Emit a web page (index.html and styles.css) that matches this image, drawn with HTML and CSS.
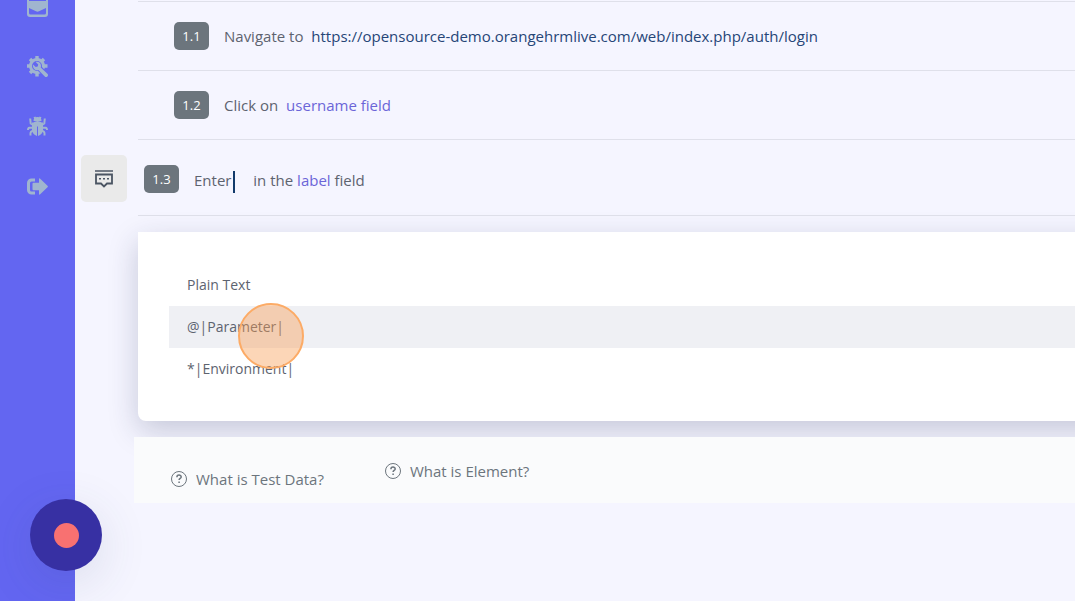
FILE: index.html
```html
<!DOCTYPE html>
<html lang="en">
<head>
<meta charset="UTF-8" />
<meta name="viewport" content="width=device-width, initial-scale=1" />
<title>Test Steps</title>
<link rel="stylesheet" href="styles.css">
</head>
<body>

<nav class="sidebar">
  <a href="#" aria-label="Inbox">
    <svg viewBox="0 0 21 21"><path fill-rule="evenodd" d="M3 0h15a3 3 0 0 1 3 3v15a3 3 0 0 1-3 3H3a3 3 0 0 1-3-3V3a3 3 0 0 1 3-3zM2 3v2h17V3zM2 12v5a1.500 1.500 0 0 0 1.500 1.500h14A1.500 1.500 0 0 0 19 17v-5l-7 3.300q-1.500.7-3 0z"/></svg>
  </a>
  <a href="#" aria-label="Settings">
    <svg viewBox="0 0 21 21">
      <circle cx="10" cy="10" r="6.500" fill="none" stroke="currentColor" stroke-width="3"/>
      <g stroke="currentColor" stroke-width="3.400">
        <path d="M10 0v4M10 16v4.500M0 10h4M16 10h4.500M3 3l3 3M17 3l-3 3M3 17l3-3"/>
      </g>
      <path class="cut" d="M12.500 12.500l7 7" stroke-width="5.500"/>
      <path d="M6 8.500L8.700 11l2-.5.5-2L8.700 6c2.600-.7 5.300 1 5.300 3.800 0 .7-.1 1.200-.3 1.700l6.700 6.300a1.800 1.800 0 0 1-2.600 2.600L11.400 14C8.400 15 5.200 12.300 6 8.500z"/>
    </svg>
  </a>
  <a href="#" aria-label="Bugs">
    <svg viewBox="0 0 21 21">
      <path d="M6.500 5a4 4 0 0 1 8 0zM5 6.500h11V14q-.5 4.500-5 6V10.500h-1V20q-4.500-1.500-5-6z"/>
      <path d="M5 8q5.500-6 11 0z"/>
      <path class="line" d="M8.500 3.500L7.500.8M12.500 3.500L13.500.8M6 9L3.700 7.500 3.200 2.500M15 9l2.300-1.500.5-5M6 11.800H2.500Q1 12 1 14M15 11.800h3.500q1.500.2 1.500 2.200M6 14.500l-2 1.300q-.8.700-.5 3.700M15 14.500l2 1.300q.8.700.5 3.700"/>
    </svg>
  </a>
  <a href="#" aria-label="Log out">
    <svg viewBox="0 0 21 21">
      <path class="line logout" d="M8 4H4.500a3 3 0 0 0-3 3v7a3 3 0 0 0 3 3H8"/>
      <path d="M5.500 7.800q0-1 1-1H12V3.200q0-1.500 1.200-.5l7.300 7q.8.8 0 1.600l-7.300 7q-1.200 1-1.200-.5v-3.500H6.500q-1 0-1-1z"/>
    </svg>
  </a>
</nav>

<main>
  <ol class="steps">
    <li class="step">
      <span class="badge">1.1</span>
      <p>Navigate to <a class="url" href="https://opensource-demo.orangehrmlive.com/web/index.php/auth/login">https://opensource-demo.orangehrmlive.com/web/index.php/auth/login</a></p>
    </li>
    <li class="step">
      <span class="badge">1.2</span>
      <p>Click on <a class="element" href="#">username field</a></p>
    </li>
    <li class="step editing">
      <button class="comment" type="button" aria-label="Add comment">
        <svg viewBox="0 0 18 18">
          <path d="M0 1h18"/>
          <path d="M1 4.500h16v9h-5l-3 3-3-3H1z" stroke-width="1.800"/>
          <path d="M4 8.800h2M8 8.800h2M12 8.800h2" stroke-width="1.600"/>
        </svg>
      </button>
      <span class="badge">1.3</span>
      <p><label for="test-data">Enter</label><input id="test-data" type="text"> in the <a class="label" href="#">label</a> field</p>
    </li>
  </ol>

  <div class="menu">
    <button type="button">Plain Text</button>
    <button type="button" class="active">@|Parameter|</button>
    <button type="button">*|Environment|</button>
    <span class="click-mark"></span>
  </div>

  <div class="help">
    <a class="help-data" href="#">
      <svg viewBox="0 0 16 16"><circle cx="8" cy="8" r="7.500"/><path class="mark" d="M5.900 6.200c0-2.800 4.300-2.700 4.300-.3 0 1.500-2.100 1.600-2.100 3.100M8.100 10.500v1.500"/></svg>
      What is Test Data?
    </a>
    <a href="#">
      <svg viewBox="0 0 16 16"><circle cx="8" cy="8" r="7.500"/><path class="mark" d="M5.900 6.200c0-2.800 4.300-2.700 4.300-.3 0 1.500-2.100 1.600-2.100 3.100M8.100 10.500v1.500"/></svg>
      What is Element?
    </a>
  </div>
</main>

<button class="record" type="button" aria-label="Record"><span></span></button>

</body>
</html>
```
FILE: styles.css
```css
* {
  box-sizing: border-box;
}

body {
  margin: 0;
  min-height: 100vh;
  display: flex;
  overflow: hidden;
  background: #f5f5ff;
  color: #5d636f;
  font: 15px/24px "Open Sans", "Noto Sans", sans-serif;
}

a {
  color: inherit;
  text-decoration: none;
}

button {
  border: 0;
  font: inherit;
  color: inherit;
  cursor: pointer;
}

.sidebar {
  flex: 0 0 75px;
  display: flex;
  flex-direction: column;
  margin-top: -24px;
  background: #6366f1;
  color: #a0b5cf;
}

.sidebar a {
  height: 60px;
  display: grid;
  place-items: center;
}

.sidebar svg {
  width: 21px;
  height: 21px;
  fill: currentColor;
}

.sidebar .line {
  fill: none;
  stroke: currentColor;
  stroke-width: 2;
}

.sidebar .logout {
  stroke-width: 3;
}

.sidebar .cut {
  stroke: #6366f1;
}

main {
  flex: 1;
  min-width: 0;
  padding-left: 63px;
}

.steps {
  list-style: none;
  margin: 0;
  padding: 1px 0 0;
}

.step {
  display: flex;
  align-items: center;
  gap: 15px;
  height: 69px;
  padding-left: 36px;
  border-top: 1px solid #dfe0ea;
}

.step p {
  margin: 0;
  white-space: nowrap;
}

.badge {
  width: 35px;
  border-radius: 5px;
  background: #6c757d;
  color: #fff;
  font-size: 13px;
  font-weight: 500;
  line-height: 28px;
  text-align: center;
}

.url {
  margin-left: 4px;
  color: #264577;
}

.element {
  margin-left: 4px;
  color: #6b65d8;
}

.label {
  color: #6b65d8;
}

/* the row being edited sits further left, with its comment button in the gutter */
.editing {
  height: 77px;
  padding-top: 2px;
  padding-left: 6px;
  border-bottom: 1px solid #dfe0ea;
}

.editing p {
  padding-top: 4px;
}

.comment {
  width: 46px;
  height: 47px;
  margin-left: -63px;
  margin-right: 2px;
  padding: 0;
  display: grid;
  place-items: center;
  border-radius: 5px;
  background: #eaeaea;
}

.comment svg {
  width: 18px;
  height: 18px;
  fill: none;
  stroke: #4b5563;
  stroke-width: 1.5;
}

#test-data {
  width: 16px;
  height: 22px;
  margin-left: 2px;
  padding: 0;
  border: 0;
  border-left: 2px solid #123a6b;
  background: none;
  outline: none;
  vertical-align: middle;
}

/* runs past the right edge, so that only its left side is rounded */
.menu {
  position: relative;
  margin: 16px -40px 0 0;
  padding: 32px 0 31px 31px;
  border-radius: 0 0 0 8px;
  background: #fff;
  box-shadow: 0 10px 30px rgba(30, 41, 80, 0.22);
}

.menu button {
  display: block;
  width: 100%;
  height: 42px;
  padding: 0 18px;
  background: none;
  font-size: 14px;
  text-align: left;
}

.menu .active {
  background: #eff0f4;
}

.click-mark {
  position: absolute;
  left: 100px;
  top: 71px;
  width: 66px;
  height: 66px;
  border: 2px solid #fcab66;
  border-radius: 50%;
  background: rgba(249, 158, 84, 0.42);
}

.help {
  position: relative;
  display: flex;
  align-items: flex-start;
  gap: 61px;
  margin: 16px 0 0 -4px;
  padding: 22px 37px 12px;
  background: #fafbfc;
  color: #6c757d;
}

.help a {
  display: flex;
  align-items: center;
  gap: 9px;
}

.help-data {
  margin-top: 8px;
}

.help svg {
  width: 16px;
  height: 16px;
  fill: none;
  stroke: #6c757d;
}

.help .mark {
  stroke-width: 1.5;
}

.record {
  position: fixed;
  left: 30px;
  bottom: 30px;
  width: 72px;
  height: 72px;
  display: grid;
  place-items: center;
  border-radius: 50%;
  background: #3730a3;
  box-shadow: 0 12px 50px rgba(60, 70, 110, 0.14);
}

.record span {
  width: 25px;
  height: 25px;
  border-radius: 50%;
  background: #f87171;
}
```
